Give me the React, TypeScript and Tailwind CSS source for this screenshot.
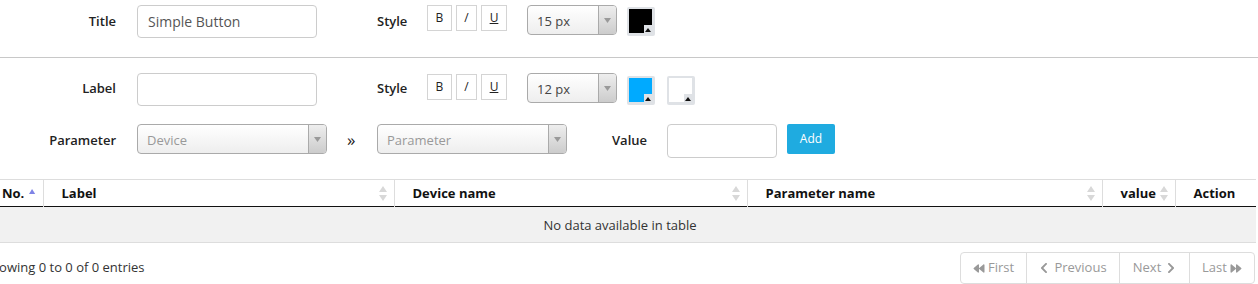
import { FaBackward, FaChevronLeft, FaChevronRight, FaForward } from "react-icons/fa";

const font = { fontFamily: '"Open Sans", "Liberation Sans", sans-serif' };

function FieldLabel({ children }: { children: React.ReactNode }) {
  return (
    <div className="w-[116px] shrink-0 text-right text-[13px] font-semibold text-[#222]">
      {children}
    </div>
  );
}

function StyleButtons() {
  return (
    <div className="flex gap-[4px]">
      <div className="flex h-[26px] w-[25px] items-center justify-center border border-[#d4d4d4] bg-white text-[12px] text-[#222]">
        B
      </div>
      <div className="flex h-[26px] w-[21px] items-center justify-center border border-[#d4d4d4] bg-white text-[12px] text-[#222]">
        /
      </div>
      <div className="flex h-[26px] w-[26px] items-center justify-center border border-[#d4d4d4] bg-white text-[12px] text-[#222] underline">
        U
      </div>
    </div>
  );
}

function Select({
  value,
  width,
  placeholder,
}: {
  value: string;
  width: string;
  placeholder?: boolean;
}) {
  return (
    <div
      className={`flex h-[30px] ${width} overflow-hidden rounded-[4px] border border-[#aaa] bg-gradient-to-b from-white to-[#eeeeee]`}
    >
      <div
        className={`flex flex-1 items-center pt-[3px] pl-[9px] text-[13px] ${
          placeholder ? "text-[#999]" : "text-[#444]"
        }`}
      >
        {value}
      </div>
      <div className="flex w-[18px] items-center justify-center border-l border-[#aaa] bg-gradient-to-b from-[#eeeeee] to-[#cccccc]">
        <svg width="7" height="5" viewBox="0 0 7 5">
          <path d="M0 0h7L3.5 5z" fill="#999" />
        </svg>
      </div>
    </div>
  );
}

function Swatch({ color }: { color: string }) {
  return (
    <div className="relative h-[29px] w-[28px] rounded-[2px] bg-[#dfe2e6] p-[2px] pr-[3px] pb-[3px]">
      <div className="h-full w-full" style={{ backgroundColor: color }} />
      <div className="absolute right-[3px] bottom-[3px] flex h-[8px] w-[8px] items-end justify-center bg-[#dfe2e6] pb-[1px]">
        <svg width="6" height="4" viewBox="0 0 6 4">
          <path d="M3 0l3 4H0z" fill="#111" />
        </svg>
      </div>
    </div>
  );
}

function SortBoth() {
  return (
    <svg width="8" height="15" viewBox="0 0 8 15">
      <path d="M4 0l4 6H0z" fill="#d8d8d8" />
      <path d="M0 9h8l-4 6z" fill="#d8d8d8" />
    </svg>
  );
}

function SortAsc() {
  return (
    <svg width="9" height="7" viewBox="0 0 9 7" className="mb-[5px]">
      <path d="M4.5 0L9 7H0z" fill="#7f84e6" />
    </svg>
  );
}

const columns = [
  { label: "No.", width: "w-[59px]", sort: "asc" },
  { label: "Label", width: "w-[351px]", sort: "both" },
  { label: "Device name", width: "w-[353px]", sort: "both" },
  { label: "Parameter name", width: "w-[355px]", sort: "both" },
  { label: "value", width: "w-[73px]", sort: "both" },
  { label: "Action", width: "w-[81px]", sort: "none" },
];

export default function App() {
  return (
    <div className="h-[284px] w-[1258px] overflow-hidden bg-white text-[#333]" style={font}>
      <div className="border-b border-[#c8c8c8] pt-[5px] pb-[19px]">
        <div className="flex h-[33px] items-start">
          <div className="mt-[7px]">
            <FieldLabel>Title</FieldLabel>
          </div>
          <div className="ml-[21px] flex h-[33px] w-[180px] items-center rounded-[4px] border border-[#ccc] px-[10px] text-[14px] text-[#555]">
            Simple Button
          </div>
          <div className="mt-[7px] ml-[60px] w-[50px] text-[13px] font-semibold text-[#222]">
            Style
          </div>
          <StyleButtons />
          <div className="ml-[20px]">
            <Select value="15 px" width="w-[90px]" />
          </div>
          <div className="mt-[2px] ml-[10px]">
            <Swatch color="#000000" />
          </div>
        </div>
      </div>

      <div className="mt-[15px] flex h-[33px] items-start">
        <div className="mt-[6px]">
          <FieldLabel>Label</FieldLabel>
        </div>
        <div className="ml-[21px] h-[33px] w-[180px] rounded-[4px] border border-[#ccc]" />
        <div className="mt-[6px] ml-[60px] w-[50px] text-[13px] font-semibold text-[#222]">
          Style
        </div>
        <div className="mt-[1px]">
          <StyleButtons />
        </div>
        <div className="ml-[20px]">
          <Select value="12 px" width="w-[90px]" />
        </div>
        <div className="mt-[3px] ml-[10px]">
          <Swatch color="#00aaff" />
        </div>
        <div className="mt-[3px] ml-[12px]">
          <Swatch color="#ffffff" />
        </div>
      </div>

      <div className="mt-[18px] flex h-[34px] items-start">
        <div className="mt-[7px]">
          <FieldLabel>Parameter</FieldLabel>
        </div>
        <div className="ml-[21px]">
          <Select value="Device" width="w-[190px]" placeholder />
        </div>
        <div className="mt-[3px] w-[50px] pl-[20px] text-[17px] text-[#222]">»</div>
        <Select value="Parameter" width="w-[190px]" placeholder />
        <div className="mt-[7px] ml-[45px] w-[55px] text-[13px] font-semibold text-[#222]">
          Value
        </div>
        <div className="h-[34px] w-[110px] rounded-[4px] border border-[#ccc]" />
        <div className="ml-[10px] flex h-[30px] w-[48px] items-center justify-center rounded-[2px] bg-[#1fabe0] text-[12px] text-white">
          Add
        </div>
      </div>

      <div className="-ml-[16px] mt-[21px] w-[1272px]">
        <table className="w-[1272px] table-fixed border-collapse text-[13px]">
          <thead>
            <tr className="h-[27px] border-t border-[#ddd] border-b border-b-[#111]">
              {columns.map((c, i) => (
                <th
                  key={c.label}
                  className={`${c.width} p-0 pt-[1px] text-left font-bold text-[#111] ${
                    i > 0 ? "border-l border-[#ddd]" : ""
                  }`}
                >
                  <div
                    className={`flex items-center pl-[18px] pr-[7px] ${
                      c.sort === "asc" ? "gap-[5px]" : "justify-between"
                    }`}
                  >
                    <span>{c.label}</span>
                    {c.sort === "both" && <SortBoth />}
                    {c.sort === "asc" && <SortAsc />}
                  </div>
                </th>
              ))}
            </tr>
          </thead>
          <tbody>
            <tr className="h-[36px] border-b border-[#ddd] bg-[#f1f1f1]">
              <td colSpan={6} className="pt-[2px] text-center text-[13px] text-[#333]">
                No data available in table
              </td>
            </tr>
          </tbody>
        </table>

        <div className="mt-[9px] flex items-center justify-between pr-[1px]">
          <div className="text-[13px] text-[#333]">Showing 0 to 0 of 0 entries</div>
          <div className="flex h-[32px] overflow-hidden rounded-[4px] border border-[#ddd] text-[13px] text-[#999]">
            <div className="flex w-[66px] items-center justify-center gap-[3px] border-r border-[#ddd]">
              <FaBackward className="h-[11px] w-[12px] text-[#999]" />
              <span>First</span>
            </div>
            <div className="flex w-[93px] items-center justify-center gap-[5px] border-r border-[#ddd]">
              <FaChevronLeft className="h-[12px] w-[10px] text-[#999]" />
              <span>Previous</span>
            </div>
            <div className="flex w-[70px] items-center justify-center gap-[5px] border-r border-[#ddd]">
              <span>Next</span>
              <FaChevronRight className="h-[12px] w-[10px] text-[#999]" />
            </div>
            <div className="flex w-[64px] items-center justify-center gap-[3px]">
              <span>Last</span>
              <FaForward className="h-[11px] w-[12px] text-[#999]" />
            </div>
          </div>
        </div>
      </div>
    </div>
  );
}
